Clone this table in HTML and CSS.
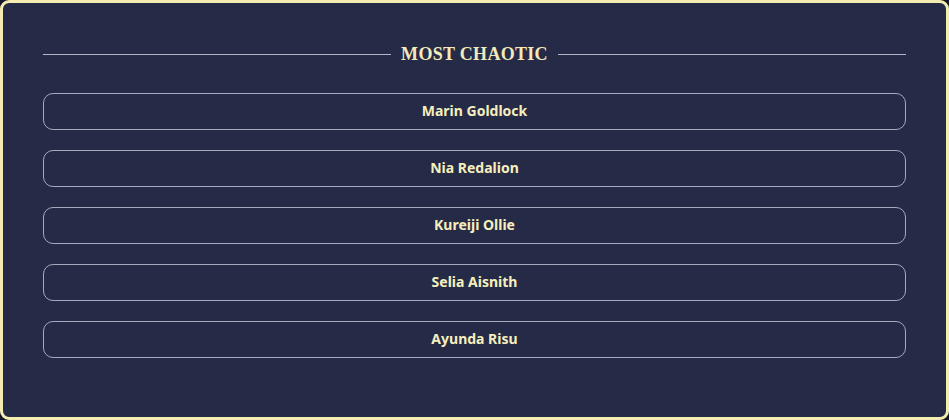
FILE: index.html
```html
<!DOCTYPE html>
<html lang="en">
<head>
    <meta charset="UTF-8">
    <meta name="viewport" content="width=device-width, initial-scale=1.0">
    <title>Most Chaotic</title>
    <link rel="stylesheet" href="styles.css">
</head>
<body>

    <div class="panel">
        <div class="title-row">
            <span class="rule"></span>
            <h2>Most Chaotic</h2>
            <span class="rule"></span>
        </div>

        <div class="list">
            <div class="name-card">Marin Goldlock</div>
            <div class="name-card">Nia Redalion</div>
            <div class="name-card">Kureiji Ollie</div>
            <div class="name-card">Selia Aisnith</div>
            <div class="name-card">Ayunda Risu</div>
        </div>
    </div>

</body>
</html>
```

FILE: styles.css
```css
html, body {
    margin: 0;
    padding: 0;
    background-color: #14162a;
}
body {
    font-family: "Noto Sans", "Open Sans", sans-serif;
    width: 949px;
    height: 420px;
}
.panel {
    box-sizing: border-box;
    width: 949px;
    height: 420px;
    background: #252a47;
    border: 3px solid #f5ecb0;
    border-radius: 9px;
    padding: 32px 40px 0 40px;
}
.title-row {
    display: flex;
    align-items: center;
    gap: 10px;
    height: 38px;
}
.rule {
    flex: 1;
    height: 1px;
    background: #b3b5c9;
}
h2 {
    margin: 0;
    font-family: "Liberation Serif", "DejaVu Serif", serif;
    font-size: 18px;
    font-weight: bold;
    text-transform: uppercase;
    letter-spacing: 0.3px;
    color: #f3e9bb;
}
.list {
    display: flex;
    flex-direction: column;
    gap: 20px;
    margin-top: 20px;
}
.name-card {
    box-sizing: border-box;
    height: 37px;
    padding-bottom: 3px;
    border: 1px solid #a6a8bd;
    border-radius: 10px;
    display: flex;
    align-items: center;
    justify-content: center;
    font-size: 14px;
    font-weight: bold;
    color: #f6efbd;
}
```
